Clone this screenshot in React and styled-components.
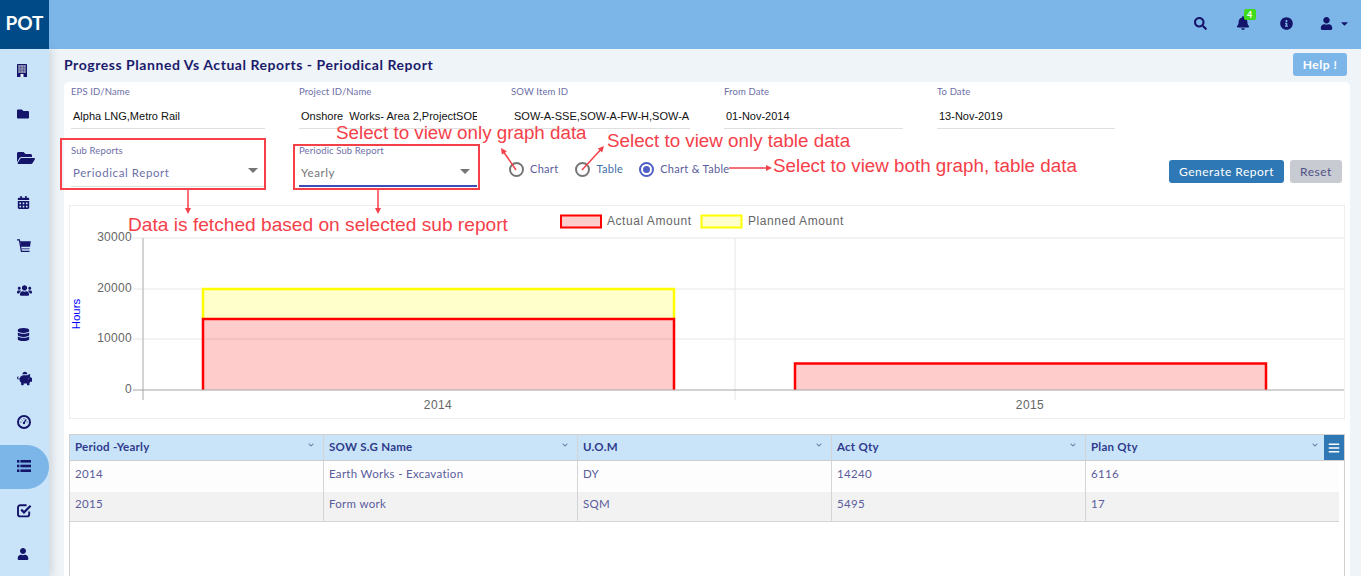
import styled, { createGlobalStyle } from "styled-components";
import {
  FaFolder, FaFolderOpen, FaCalendarAlt, FaUsers, FaDatabase,
  FaPiggyBank, FaUser, FaSearch, FaBell, FaInfoCircle, FaCaretDown, FaBars, FaChevronDown,
} from "react-icons/fa";

const GlobalStyle = createGlobalStyle`
  html, body { margin: 0; padding: 0; height: 100%; overflow: hidden; }
  body { font-family: "Lato", sans-serif; background: #eef4f8; }
  * { box-sizing: border-box; }
`;

const Page = styled.div`
  position: relative;
  width: 1361px;
  height: 576px;
  overflow: hidden;
  display: flex;
  flex-direction: column;
`;

const TopBar = styled.header`
  height: 49px;
  flex: none;
  display: flex;
  align-items: center;
  background: #7cb6e8;
  color: #14146b;
`;

const Logo = styled.div`
  width: 49px;
  height: 49px;
  padding-bottom: 4px;
  background: #004b87;
  color: #fff;
  font-size: 19px;
  font-weight: 700;
  display: flex;
  align-items: center;
  justify-content: center;
`;

const TopIcons = styled.div`
  margin-left: auto;
  display: flex;
  align-items: center;
  padding: 0 8px 3px 0;
`;

const TopIcon = styled.span`
  position: relative;
  display: flex;
  align-items: center;
  justify-content: ${props => props.$end ? "flex-end" : "center"};
  gap: 6px;
  width: ${props => props.$w || 43}px;
  padding-right: ${props => props.$end ? 3 : 0}px;
`;

const Badge = styled.span`
  position: absolute;
  top: -7px;
  left: 22px;
  width: 12px;
  height: 11px;
  border-radius: 2px;
  background: #3fdc1c;
  color: #fff;
  font-size: 9px;
  font-weight: 700;
  line-height: 11px;
  text-align: center;
`;

const Body = styled.div`
  flex: 1;
  display: flex;
  min-height: 0;
`;

const SideBar = styled.nav`
  width: 49px;
  flex: none;
  background: #c9e4f9;
  box-shadow: 3px 0 8px rgba(60, 80, 90, 0.18);
  display: flex;
  flex-direction: column;
  z-index: 1;
`;

const SideItem = styled.div`
  height: 44px;
  flex: none;
  display: flex;
  align-items: center;
  padding: 0 0 2px 17px;
  color: #14146b;
  background: ${props => props.$active ? "#7cb6e8" : "transparent"};
  border-radius: ${props => props.$active ? "0 22px 22px 0" : "0"};
`;

const Main = styled.main`
  flex: 1;
  min-width: 0;
  padding: 0 11px 0 15px;
  display: flex;
  flex-direction: column;
`;

const TitleRow = styled.div`
  height: 33px;
  flex: none;
  display: flex;
  align-items: center;
  justify-content: space-between;
  padding: 0 3px 2px 0;
`;

const Title = styled.h1`
  margin: 0;
  font-size: 14px;
  font-weight: 700;
  letter-spacing: 0.55px;
  color: #1b1b6b;
`;

const HelpButton = styled.button`
  width: 54px;
  height: 23px;
  border: none;
  border-radius: 3px;
  background: #7cb6e8;
  color: #fff;
  font: 700 12px "Lato", sans-serif;
  letter-spacing: 0.5px;
`;

const Card = styled.section`
  flex: 1;
  background: #fff;
  border-radius: 5px 5px 0 0;
  padding: 3px 5px 0;
  min-height: 0;
`;

const FormRow = styled.div`
  display: flex;
  gap: 34px;
  padding: 0 3px 0 2px;
  margin-bottom: ${props => props.$mb}px;
`;

const Field = styled.div`
  width: ${props => props.$w}px;
  flex: none;
`;

const FieldLabel = styled.div`
  height: 12px;
  font-size: 9.5px;
  line-height: 14px;
  letter-spacing: 0.12px;
  color: #6d6fa8;
`;

const FieldValue = styled.div`
  height: ${props => props.$h}px;
  display: flex;
  align-items: center;
  justify-content: space-between;
  padding: ${props => props.$pt}px 7px 0 ${props => props.$pl || 2}px;
  overflow: hidden;
  white-space: nowrap;
  border-bottom: ${props => props.$active ? "2px solid #3f4db8" : "1px solid #dfdfdf"};
  font: 11px "Liberation Sans", sans-serif;
  color: #111;
`;

const SelectText = styled.span`
  font: 11.5px "Lato", sans-serif;
  letter-spacing: 0.6px;
  color: ${props => props.$muted ? "#757575" : "#6d6fa8"};
`;

const Caret = styled.span`
  width: 0;
  height: 0;
  border-left: 5px solid transparent;
  border-right: 5px solid transparent;
  border-top: 5px solid #757575;
  margin-top: -3px;
`;

const RadioGroup = styled.div`
  display: flex;
  align-items: center;
  height: 16px;
  margin: 17px 0 0 -2px;
`;

const Radio = styled.span`
  width: 15px;
  height: 15px;
  flex: none;
  border-radius: 50%;
  border: 2px solid ${props => props.$on ? "#4f5fc4" : "#757575"};
  display: flex;
  align-items: center;
  justify-content: center;
  &::after {
    content: "";
    width: 7px;
    height: 7px;
    border-radius: 50%;
    background: ${props => props.$on ? "#4f5fc4" : "transparent"};
  }
`;

const RadioText = styled.span`
  margin: -2px ${props => props.$mr}px 0 6px;
  font-size: 11px;
  letter-spacing: 0.3px;
  color: ${props => props.$blue ? "#3f6fa8" : "#5a5c9c"};
  white-space: nowrap;
`;

const Actions = styled.div`
  margin: 16px 0 0 auto;
  display: flex;
  gap: 6px;
`;

const ActionButton = styled.button`
  height: 23px;
  width: ${props => props.$w}px;
  border: none;
  border-radius: 3px;
  background: ${props => props.$primary ? "#2e78b5" : "#c8cbd1"};
  color: ${props => props.$primary ? "#fff" : "#4f5186"};
  font: 400 12px "Lato", sans-serif;
  letter-spacing: 0.5px;
`;

const ChartBox = styled.div`
  height: 214px;
  border: 1px solid #efefef;
  svg { display: block; }
  text { font-family: "Liberation Sans", sans-serif; }
`;

const Grid = styled.div`
  display: grid;
  grid-template-columns: 254px 254px 254px 254px 1fr;
`;

const Table = styled.div`
  position: relative;
  margin-top: 15px;
  height: 200px;
  border: 1px solid #d0d0d0;
  border-bottom: none;
`;

const HeaderRow = styled(Grid)`
  height: 26px;
  background: #c9e4f9;
  border-bottom: 1px solid #cfcfcf;
`;

const HeaderCell = styled.div`
  display: flex;
  align-items: center;
  justify-content: space-between;
  padding: 0 9px 2px 5px;
  border-right: 1px solid #d4d4d4;
  font-size: 11.5px;
  font-weight: 700;
  letter-spacing: 0.25px;
  color: #2f3a8c;
  svg { font-size: 6px; color: #6a7ca8; margin-top: -3px; }
  &:last-child { border-right: none; padding-right: 26px; }
`;

const MenuButton = styled.span`
  position: absolute;
  top: 0;
  right: 0;
  width: 20px;
  height: 25px;
  background: #2e78b5;
  color: #fff;
  display: flex;
  align-items: center;
  justify-content: center;
  font-size: 12px;
`;

const DataRows = styled.div`
  margin-right: 5px;
  border-bottom: 1px solid #d4d4d4;
`;

const DataRow = styled(Grid)`
  height: ${props => props.$h}px;
  background: ${props => props.$alt ? "#f2f2f2" : "#fdfdfd"};
`;

const DataCell = styled.div`
  padding: ${props => props.$pt}px 5px 0;
  border-right: 1px solid #d4d4d4;
  font-size: 11.5px;
  letter-spacing: 0.3px;
  color: #5a5c9c;
  &:last-child { border-right: none; }
`;

// callouts drawn over the screenshot, so these are placed by hand
const Note = styled.span`
  position: absolute;
  left: ${props => props.$x}px;
  top: ${props => props.$y}px;
  font: ${props => props.$size || 18.8}px/22px "Liberation Sans", sans-serif;
  color: #f5404a;
  white-space: nowrap;
`;

const Overlay = styled.svg`
  position: absolute;
  inset: 0;
  pointer-events: none;
`;

const INK = "#14146b";

const BuildingIcon = () => (
  <svg width="10" height="13" viewBox="0 0 10 13">
    <rect width="10" height="13" rx="0.5" fill={INK} />
    <rect x="1.2" y="1" width="7.6" height="8" fill="#8b92b0" />
    <path d="M3.5 1v8M6.5 1v8M1.2 3.7h7.6M1.2 6.3h7.6" stroke={INK} strokeWidth="0.5" strokeOpacity="0.5" />
    <rect x="3.5" y="10" width="3" height="3" fill="#eef4fa" />
  </svg>
);

const CartIcon = () => (
  <svg width="14" height="14" viewBox="0 0 14 14" fill="none">
    <path d="M0 .8h2.4L4.4 12.4h8.2" stroke={INK} strokeWidth="1.2" />
    <path d="M3 2.2h10.8L13 7.8H4z" fill={INK} />
    <path d="M4.6 9.8h8" stroke={INK} strokeWidth="0.8" />
  </svg>
);

const GaugeIcon = () => (
  <svg width="14" height="14" viewBox="0 0 14 14" fill="none">
    <circle cx="7" cy="7" r="6" stroke={INK} strokeWidth="2" />
    <path d="M7 7.6 9.2 4.4" stroke={INK} strokeWidth="1.3" />
    <circle cx="7" cy="8" r="1.2" fill={INK} />
    <path d="M3.4 7h1.1M7 3.2v1M4.6 4.6l.7.7M9.6 7h1.1" stroke={INK} strokeWidth="0.9" />
  </svg>
);

const ListIcon = () => (
  <svg width="14" height="12" viewBox="0 0 14 12" fill={INK}>
    <rect y="0" width="2.4" height="2.6" />
    <rect x="3.4" y="0" width="10.6" height="2.6" />
    <rect y="4.7" width="2.4" height="2.6" />
    <rect x="3.4" y="4.7" width="10.6" height="2.6" />
    <rect y="9.4" width="2.4" height="2.6" />
    <rect x="3.4" y="9.4" width="10.6" height="2.6" />
  </svg>
);

const CheckIcon = () => (
  <svg width="15" height="15" viewBox="0 0 15 15" fill="none">
    <path d="M12.2 8.6v2.6a2.2 2.2 0 0 1-2.2 2.2H3.2A2.2 2.2 0 0 1 1 11.2V4.4a2.2 2.2 0 0 1 2.2-2.2h6.4" stroke={INK} strokeWidth="1.9" />
    <path d="M4.2 6.6 7 9.4 13.6 2.8" stroke={INK} strokeWidth="2.2" />
  </svg>
);

const sideIcons = [
  <BuildingIcon key="a" />, <FaFolder key="b" size={12} />, <FaFolderOpen key="c" size={18} />, <FaCalendarAlt key="d" size={13} />,
  <CartIcon key="e" />, <FaUsers key="f" size={15} />, <FaDatabase key="g" size={13} />, <FaPiggyBank key="h" size={15} />,
  <GaugeIcon key="i" />, <ListIcon key="j" />, <CheckIcon key="k" />, <FaUser key="l" size={12} />,
];

const columns = ["Period -Yearly", "SOW S.G Name", "U.O.M", "Act Qty", "Plan Qty"];
const rows = [
  ["2014", "Earth Works - Excavation", "DY", "14240", "6116"],
  ["2015", "Form work", "SQM", "5495", "17"],
];

const Chart = () => (
  <svg width="1274" height="212" viewBox="70 206 1274 212">
    {[238, 289, 339].map(y => <line key={y} x1="133" x2="1344" y1={y} y2={y} stroke="#e6e6e6" />)}
    <line x1="735" x2="735" y1="238" y2="400" stroke="#e6e6e6" />
    <line x1="143" x2="143" y1="238" y2="400" stroke="#c4c4c4" strokeWidth="1.5" />
    <path d="M203 319V289H674V319z" fill="#ffffcc" />
    <path d="M203 319V289H674V319" fill="none" stroke="#ffff00" strokeWidth="2.5" />
    <path d="M203 390V319H674V390" fill="rgba(255,0,0,0.2)" stroke="#ff0000" strokeWidth="2.5" />
    <path d="M795 390V363.5H1266V390" fill="rgba(255,0,0,0.2)" stroke="#ff0000" strokeWidth="2.5" />
    <line x1="133" x2="1344" y1="390" y2="390" stroke="#a6a6a6" strokeWidth="1.2" />
    {[["30000", 241], ["20000", 292], ["10000", 342], ["0", 393]].map(([t, y]) => (
      <text key={t} x="132" y={y} textAnchor="end" fontSize="12" fill="#666" letterSpacing="0.3">{t}</text>
    ))}
    <text x="438" y="409" textAnchor="middle" fontSize="12" fill="#666" letterSpacing="0.4">2014</text>
    <text x="1030" y="409" textAnchor="middle" fontSize="12" fill="#666" letterSpacing="0.4">2015</text>
    <text transform="translate(80 314) rotate(-90)" textAnchor="middle" fontSize="11.5" fill="#0000ff">Hours</text>
    <rect x="561" y="215.5" width="40" height="12" fill="#ffcccc" stroke="#ff0000" strokeWidth="2" />
    <text x="607" y="225" fontSize="12" fill="#666" letterSpacing="0.55">Actual Amount</text>
    <rect x="701.5" y="215.5" width="40" height="12" fill="#ffffcc" stroke="#ffff00" strokeWidth="2" />
    <text x="748" y="225" fontSize="12" fill="#666" letterSpacing="0.55">Planned Amount</text>
  </svg>
);

const Arrow = ({ x1, y1, x2, y2 }) => {
  const a = Math.atan2(y2 - y1, x2 - x1);
  const p = (d, s) => `${x2 - d * Math.cos(a) + s * Math.sin(a)},${y2 - d * Math.sin(a) - s * Math.cos(a)}`;
  return (
    <g>
      <line x1={x1} y1={y1} x2={x2 - 3 * Math.cos(a)} y2={y2 - 3 * Math.sin(a)} stroke="#f5404a" strokeWidth="1.5" />
      <polygon points={`${x2},${y2} ${p(6, 3)} ${p(6, -3)}`} fill="#f5404a" />
    </g>
  );
};

const App = () => (
  <Page>
    <GlobalStyle />
    <TopBar>
      <Logo>POT</Logo>
      <TopIcons>
        <TopIcon><FaSearch size={13} /></TopIcon>
        <TopIcon><FaBell size={14} /><Badge>4</Badge></TopIcon>
        <TopIcon><FaInfoCircle size={13} /></TopIcon>
        <TopIcon $w={45.5} $end><FaUser size={13} /><FaCaretDown size={11} /></TopIcon>
      </TopIcons>
    </TopBar>
    <Body>
      <SideBar>
        {sideIcons.map((icon, i) => <SideItem key={i} $active={i === 9}>{icon}</SideItem>)}
      </SideBar>
      <Main>
        <TitleRow>
          <Title>Progress Planned Vs Actual Reports - Periodical Report</Title>
          <HelpButton>Help !</HelpButton>
        </TitleRow>
        <Card>
          <FormRow $mb={15}>
            <Field $w={194}><FieldLabel>EPS ID/Name</FieldLabel><FieldValue $h={32} $pt={6}>Alpha LNG,Metro Rail</FieldValue></Field>
            <Field $w={178}><FieldLabel>Project ID/Name</FieldLabel><FieldValue $h={32} $pt={6}>Onshore&nbsp; Works- Area 2,ProjectSOE</FieldValue></Field>
            <Field $w={179}><FieldLabel>SOW Item ID</FieldLabel><FieldValue $h={32} $pt={6} $pl={3}><span>SOW-A-SSE,SOW-A-FW-H,SOW-A</span></FieldValue></Field>
            <Field $w={179}><FieldLabel>From Date</FieldLabel><FieldValue $h={32} $pt={6}>01-Nov-2014</FieldValue></Field>
            <Field $w={178}><FieldLabel>To Date</FieldLabel><FieldValue $h={32} $pt={6}>13-Nov-2019</FieldValue></Field>
          </FormRow>
          <FormRow $mb={18}>
            <Field $w={194}><FieldLabel>Sub Reports</FieldLabel><FieldValue $h={31} $pt={2}><SelectText>Periodical Report</SelectText><Caret /></FieldValue></Field>
            <Field $w={178}><FieldLabel>Periodic Sub Report</FieldLabel><FieldValue $h={31} $pt={4} $active><SelectText $muted>Yearly</SelectText><Caret /></FieldValue></Field>
            <RadioGroup>
              <Radio /><RadioText $mr={17}>Chart</RadioText>
              <Radio /><RadioText $mr={16} $blue>Table</RadioText>
              <Radio $on /><RadioText $mr={0}>Chart &amp; Table</RadioText>
            </RadioGroup>
            <Actions>
              <ActionButton $primary $w={115}>Generate Report</ActionButton>
              <ActionButton $w={52}>Reset</ActionButton>
            </Actions>
          </FormRow>
          <ChartBox><Chart /></ChartBox>
          <Table>
            <HeaderRow>
              {columns.map(c => <HeaderCell key={c}>{c}<FaChevronDown /></HeaderCell>)}
            </HeaderRow>
            <MenuButton><FaBars /></MenuButton>
            <DataRows>
              {rows.map((r, i) => (
                <DataRow key={r[0]} $alt={i === 1} $h={i === 1 ? 29 : 31}>
                  {r.map((v, j) => <DataCell key={j} $pt={i === 1 ? 5 : 6}>{v}</DataCell>)}
                </DataRow>
              ))}
            </DataRows>
          </Table>
        </Card>
      </Main>
    </Body>

    <Overlay width="1361" height="576" viewBox="0 0 1361 576">
      <rect x="61" y="139" width="204" height="50" fill="none" stroke="#f5404a" strokeWidth="2" />
      <rect x="294" y="145" width="185" height="44" fill="none" stroke="#f5404a" strokeWidth="2" />
      <Arrow x1={188} y1={190} x2={188} y2={214} />
      <Arrow x1={378} y1={190} x2={378} y2={214} />
      <Arrow x1={516} y1={170} x2={501} y2={148} />
      <Arrow x1={582} y1={170} x2={604} y2={146} />
      <Arrow x1={729} y1={168} x2={772} y2={168} />
    </Overlay>
    <Note $x={336} $y={122}>Select to view only graph data</Note>
    <Note $x={607} $y={130}>Select to view only table data</Note>
    <Note $x={773} $y={155}>Select to view both graph, table data</Note>
    <Note $x={128} $y={214} $size={19.15}>Data is fetched based on selected sub report</Note>
  </Page>
);

export default App;
